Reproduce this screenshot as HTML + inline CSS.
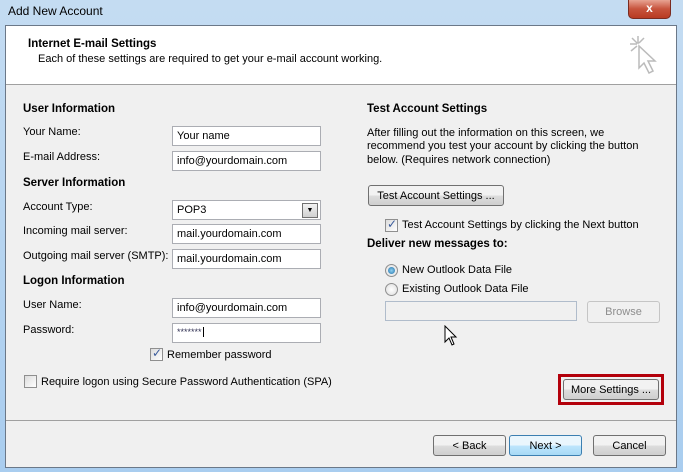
<!DOCTYPE html><html><head><style>
*{box-sizing:border-box}body{margin:0;width:683px;height:472px;overflow:hidden;background:linear-gradient(#c4dcf2,#a9cdef);font-family:"Liberation Sans",sans-serif;font-size:11px;color:#000;position:relative}
.a{position:absolute;white-space:nowrap}
.b{font-weight:bold;font-size:11.5px}
.in{position:absolute;background:#fff;border:1px solid #abadb3;height:20px;padding:3px 4px 2px;font-size:11px}
.btn{position:absolute;border:1px solid #707070;border-radius:3px;background:linear-gradient(#f2f2f2 50%,#dddddd 50%,#cfcfcf);text-align:center;font-size:11px;line-height:20px}
.cb{position:absolute;width:13px;height:13px;border:1px solid #8f8f8f;background:linear-gradient(135deg,#dcdcdc,#fff)}
.rd{position:absolute;width:13px;height:13px;border:1px solid #8f8f8f;border-radius:50%;background:radial-gradient(#fff,#dcdcdc)}
</style></head><body>
<div class="a" style="left:8px;top:4px;font-size:12px">Add New Account</div>
<div class="a" style="left:628px;top:0;width:43px;height:19px;border:1px solid #7a2b20;border-top:none;border-radius:0 0 5px 5px;background:linear-gradient(#e8a493,#c7533c 50%,#b83a22);color:#fff;font-weight:bold;text-align:center;font-size:12px;line-height:17px">x</div>
<div class="a" style="left:5px;top:25px;width:672px;height:443px;border:1px solid #6b7888;background:#f0f0f0"></div>
<div class="a" style="left:6px;top:26px;width:670px;height:59px;background:#fff;border-bottom:1px solid #a0a0a0"></div>
<div class="a b" style="left:28px;top:38px">Internet E-mail Settings</div>
<div class="a" style="left:38px;top:53px">Each of these settings are required to get your e-mail account working.</div>
<svg class="a" style="left:628px;top:33px" width="36" height="50"><g stroke="#bbb" stroke-width="1.5" fill="none"><path d="M10 3v8M2 11h7M4 5l5 5M16 5l-5 5M3 18l6-5"/><path d="M11 13v22l5-5 5 10 4-2-5-10h7z" fill="#fff"/></g></svg>
<div class="a b" style="left:23px;top:103px">User Information</div>
<div class="a" style="left:23px;top:126px">Your Name:</div>
<div class="in" style="left:172px;top:126px;width:149px">Your name</div>
<div class="a" style="left:23px;top:151px">E-mail Address:</div>
<div class="in" style="left:172px;top:151px;width:149px">info@yourdomain.com</div>
<div class="a b" style="left:23px;top:177px">Server Information</div>
<div class="a" style="left:23px;top:201px">Account Type:</div>
<div class="in" style="left:172px;top:200px;width:149px">POP3</div>
<div class="a" style="left:302px;top:203px;width:16px;height:15px;border:1px solid #707070;background:linear-gradient(#f2f2f2,#d0d0d0);font-size:7px;text-align:center;line-height:14px">▼</div>
<div class="a" style="left:23px;top:225px">Incoming mail server:</div>
<div class="in" style="left:172px;top:224px;width:149px">mail.yourdomain.com</div>
<div class="a" style="left:23px;top:250px">Outgoing mail server (SMTP):</div>
<div class="in" style="left:172px;top:249px;width:149px">mail.yourdomain.com</div>
<div class="a b" style="left:23px;top:275px">Logon Information</div>
<div class="a" style="left:23px;top:299px">User Name:</div>
<div class="in" style="left:172px;top:298px;width:149px">info@yourdomain.com</div>
<div class="a" style="left:23px;top:324px">Password:</div>
<div class="in" style="left:172px;top:323px;width:149px;font-size:9px;color:#335">*******<span style="border-left:1px solid #000;margin-left:1px"></span></div>
<div class="cb" style="left:150px;top:348px"><span style="position:absolute;left:1px;top:-3px;color:#3b5c9c;font-size:12px">✓</span></div>
<div class="a" style="left:167px;top:349px">Remember password</div>
<div class="cb" style="left:24px;top:375px"></div>
<div class="a" style="left:41px;top:376px">Require logon using Secure Password Authentication (SPA)</div>
<div class="a b" style="left:367px;top:103px">Test Account Settings</div>
<div class="a" style="left:367px;top:127px;line-height:13.3px">After filling out the information on this screen, we<br>recommend you test your account by clicking the button<br>below. (Requires network connection)</div>
<div class="btn" style="left:368px;top:185px;width:136px;height:21px">Test Account Settings ...</div>
<div class="cb" style="left:385px;top:219px"><span style="position:absolute;left:1px;top:-3px;color:#3b5c9c;font-size:12px">✓</span></div>
<div class="a" style="left:402px;top:219px">Test Account Settings by clicking the Next button</div>
<div class="a b" style="left:367px;top:238px">Deliver new messages to:</div>
<div class="rd" style="left:385px;top:264px"><span style="position:absolute;left:2px;top:2px;width:7px;height:7px;border-radius:50%;background:radial-gradient(#8fd0f0,#1f6fa8)"></span></div>
<div class="a" style="left:402px;top:264px">New Outlook Data File</div>
<div class="rd" style="left:385px;top:283px"></div>
<div class="a" style="left:402px;top:283px">Existing Outlook Data File</div>
<div class="a" style="left:385px;top:301px;width:192px;height:20px;border:1px solid #b0bccb;background:#f0f0f0"></div>
<div class="a" style="left:587px;top:301px;width:73px;height:22px;border:1px solid #c5c5c5;border-radius:3px;color:#8d8d8d;text-align:center;line-height:20px">Browse</div>
<svg class="a" style="left:444px;top:325px" width="14" height="22"><path d="M1 1v16l4-4 3 7 2-1-3-7h5z" fill="#fff" stroke="#000"/></svg>
<div class="a" style="left:558px;top:374px;width:106px;height:31px;border:3px solid #b3000b"></div>
<div class="btn" style="left:563px;top:379px;width:96px;height:21px">More Settings ...</div>
<div class="a" style="left:6px;top:420px;width:670px;height:1px;background:#a0a0a0"></div>
<div class="btn" style="left:433px;top:435px;width:73px;height:21px">&lt; Back</div>
<div class="btn" style="left:509px;top:435px;width:73px;height:21px;border-color:#3c7fb1;background:linear-gradient(#eaf6fd 50%,#bee6fd 50%,#a7d9f5)">Next &gt;</div>
<div class="btn" style="left:593px;top:435px;width:73px;height:21px">Cancel</div>
</body></html>
